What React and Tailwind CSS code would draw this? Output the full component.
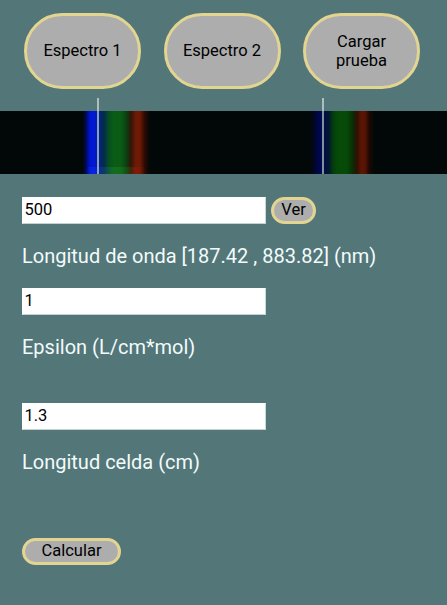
const PILL = "border-[#e2d491] bg-[#adadad] text-black flex items-center justify-center text-center";

function SpectrumButton({ children }) {
  return (
    <button className={`${PILL} h-[76px] w-[117px] rounded-[38px] border-[3px] px-1 pb-[1px] text-[16.5px] leading-[19px]`}>
      {children}
    </button>
  );
}

function Field({ value, label, children }) {
  return (
    <div>
      <div className="flex items-center gap-[5px]">
        <input
          defaultValue={value}
          className="h-[27px] w-[244px] border border-white border-r-[#c8dada] border-b-[#c5d2d2] bg-white pr-1 pb-[3px] pl-[1.5px] text-[16.5px] text-black outline-none"
        />
        {children}
      </div>
      <p className="mt-[17px] h-[30px] text-[20px] leading-[30px] whitespace-nowrap text-[#f2fbfb]">{label}</p>
    </div>
  );
}

function Marker({ className }) {
  return <div className={`absolute -top-[13px] h-[76px] w-[2px] ${className}`} />;
}

export default function App() {
  return (
    <main className="h-[605px] w-[447px] overflow-hidden bg-[#537679] pt-[13px] font-[Roboto,'Liberation_Sans',sans-serif]">
      <div className="flex gap-[22.5px] pl-[24px]">
        <SpectrumButton>Espectro 1</SpectrumButton>
        <SpectrumButton>Espectro 2</SpectrumButton>
        <SpectrumButton>
          Cargar
          <br />
          prueba
        </SpectrumButton>
      </div>

      <div className="relative mt-[22px] flex h-[63px] bg-[#020807]">
        <div className="h-full w-[224px] bg-[linear-gradient(90deg,#020807_83px,#00085c_86px,#0015d0_90px,#0018d8_94px,#052090_98px,#042c4a_104px,#075020_109px,#0a5c16_114px,#0a5c14_121px,#0c3c10_127px,#301606_131px,#701a06_136px,#6e1904_140px,#280904_145px,#020807_150px)]" />
        <div className="h-full flex-1 bg-[linear-gradient(90deg,#020807_87px,#000640_93px,#020a52_99px,#02182c_105px,#043c0c_109px,#054a06_113px,#054a06_123px,#0a2c06_129px,#300f03_133px,#5a1503_137px,#581403_141px,#200804_145px,#020807_150px)]" />
        <div className="absolute bottom-0 left-[86px] h-[7px] w-[60px] bg-[linear-gradient(90deg,transparent,#1e34ff55_6px,#1e34ff44_12px,#28a03044_28px,#28a03033_38px,#b0201044_50px,transparent)]" />
        <Marker className="left-[97px] bg-[#8a9fc4]" />
        <Marker className="left-[322px] bg-[#7e919f]" />
        <div className="absolute -top-[13px] left-[97px] h-[13px] w-[2px] bg-[#aebfb9]" />
        <div className="absolute -top-[13px] left-[322px] h-[13px] w-[2px] bg-[#aebdbd]" />
      </div>

      <form className="flex flex-col items-start pt-[23px] pl-[22px]" onSubmit={(event) => event.preventDefault()}>
        <Field value="500" label="Longitud de onda [187.42 , 883.82] (nm)">
          <button type="button" className={`${PILL} h-[27px] w-[45px] rounded-full border-[3px] text-[16.5px] leading-none`}>
            Ver
          </button>
        </Field>
        <div className="mt-[17px]">
          <Field value="1" label="Epsilon (L/cm*mol)" />
        </div>
        <div className="mt-[41px]">
          <Field value="1.3" label="Longitud celda (cm)" />
        </div>
        <button type="submit" className={`${PILL} mt-[61px] h-[27px] w-[99px] rounded-full border-[3px] text-[16.5px] leading-none`}>
          Calcular
        </button>
      </form>
    </main>
  );
}
